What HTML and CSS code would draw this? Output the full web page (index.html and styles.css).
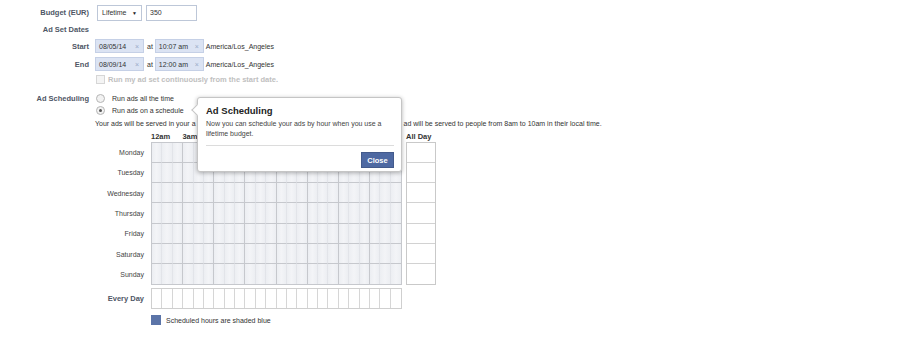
FILE: index.html
```html
<!DOCTYPE html>
<html lang="en">
<head>
    <meta charset="UTF-8">
    <title>Ad Scheduling</title>
    <link rel="stylesheet" href="styles.css">
</head>
<body>
<div class="page">
    <div class="form">
        <div class="row row-budget">
            <div class="label">Budget (EUR)</div>
            <div class="field">
                <span class="select">Lifetime <span class="caret">&#9660;</span></span>
                <span class="text-input">350</span>
            </div>
        </div>
        <div class="row row-section">
            <div class="label">Ad Set Dates</div>
        </div>
        <div class="row row-date">
            <div class="label">Start</div>
            <div class="field">
                <span class="date">08/05/14<i class="clear">&#215;</i></span>
                <span class="at">at</span>
                <span class="date time">10:07 am<i class="clear">&#215;</i></span>
                <span class="tz">America/Los_Angeles</span>
            </div>
        </div>
        <div class="row row-date row-end">
            <div class="label">End</div>
            <div class="field">
                <span class="date">08/09/14<i class="clear">&#215;</i></span>
                <span class="at">at</span>
                <span class="date time">12:00 am<i class="clear">&#215;</i></span>
                <span class="tz">America/Los_Angeles</span>
            </div>
        </div>
        <div class="row row-check">
            <div class="label"></div>
            <div class="field">
                <span class="checkbox"></span>
                <span class="check-text">Run my ad set continuously from the start date.</span>
            </div>
        </div>
        <div class="row row-radio">
            <div class="label">Ad Scheduling</div>
            <div class="field">
                <span class="radio"></span>
                <span>Run ads all the time</span>
            </div>
        </div>
        <div class="row row-radio row-radio2">
            <div class="label"></div>
            <div class="field">
                <span class="radio checked"></span>
                <span>Run ads on a schedule</span>
            </div>
        </div>
        <div class="row row-note">
            <div class="label"></div>
            <div class="field note">
                <span>Your ads will be served in your a</span>
                <span class="note-end">ad will be served to people from 8am to 10am in their local time.</span>
            </div>
        </div>
    </div>

    <div class="schedule">
        <div class="sched-head">
            <div class="day-col"></div>
            <div class="hour-labels">
                <span>12am</span><span>3am</span>
            </div>
            <div class="allday-label">All Day</div>
        </div>
        <div class="sched-body">
            <div class="day-col day-labels">
                <div>Monday</div>
                <div>Tuesday</div>
                <div>Wednesday</div>
                <div>Thursday</div>
                <div>Friday</div>
                <div>Saturday</div>
                <div>Sunday</div>
            </div>
            <div class="hours-grid" id="hours"></div>
            <div class="allday-col" id="allday"></div>
        </div>
        <div class="sched-every">
            <div class="day-col every-label">Every Day</div>
            <div class="every-grid" id="every"></div>
        </div>
        <div class="legend">
            <span class="swatch"></span>
            <span>Scheduled hours are shaded blue</span>
        </div>
    </div>

    <div class="popover">
        <span class="arrow"></span>
        <div class="pop-title">Ad Scheduling</div>
        <div class="pop-text">Now you can schedule your ads by hour when you use a lifetime budget.</div>
        <div class="pop-footer">
            <span class="btn-close">Close</span>
        </div>
    </div>
</div>

<script>
    function fill(id, count, cls) {
        var box = document.getElementById(id);
        for (var i = 0; i < count; i++) {
            var cell = document.createElement("div");
            cell.className = cls;
            box.appendChild(cell);
        }
    }
    fill("hours", 7 * 24, "hour");
    fill("allday", 7, "allday-cell");
    fill("every", 24, "every-cell");
</script>
</body>
</html>
```

FILE: styles.css
```css
body {
    margin: 0;
    font-family: "Liberation Sans", Arial, sans-serif;
    font-size: 7px;
    color: #333;
    background: #fff;
}

.page {
    position: relative;
    width: 900px;
    height: 350px;
}

.form {
    padding-top: 4px;
}

.row {
    display: flex;
    align-items: center;
}

.label {
    width: 89px;
    flex: none;
    text-align: right;
    font-weight: bold;
    font-size: 7.5px;
    color: #4e5665;
}

.field {
    display: flex;
    align-items: center;
    margin-left: 6px;
}

/* budget */
.row-budget {
    height: 17px;
}

.select {
    display: flex;
    align-items: center;
    justify-content: space-between;
    width: 45px;
    height: 16px;
    margin-left: 2px;
    padding: 0 4px;
    box-sizing: border-box;
    border: 1px solid #bdc7d8;
    background: #fff;
}

.caret {
    font-size: 5px;
    color: #222;
}

.text-input {
    display: flex;
    align-items: center;
    width: 51px;
    height: 16px;
    margin-left: 4px;
    padding-left: 3px;
    box-sizing: border-box;
    border: 1px solid #bdc7d8;
}

/* dates */
.row-section {
    height: 16px;
}

.row-date {
    height: 14px;
    margin-top: 2px;
}

.row-end {
    margin-top: 4px;
}

.date {
    display: flex;
    align-items: center;
    justify-content: space-between;
    width: 49px;
    height: 14px;
    padding: 0 4px 0 3px;
    box-sizing: border-box;
    border: 1px solid #c5d0e6;
    background: #dbe3f3;
    color: #333;
}

.clear {
    font-style: normal;
    font-size: 7px;
    color: #9aaac8;
}

.at {
    margin: 0 2px 0 3px;
}

.tz {
    margin-left: 2px;
}

.row-check {
    height: 10px;
    margin-top: 3px;
}

.checkbox {
    width: 7px;
    height: 7px;
    margin-left: 1px;
    border: 1px solid #d6d6d6;
    background: #f4f4f4;
}

.check-text {
    margin-left: 3px;
    font-weight: bold;
    font-size: 7.5px;
    color: #c0c0c0;
}

/* scheduling radios */
.row-radio {
    height: 10px;
    margin-top: 9px;
}

.row-radio2 {
    margin-top: 2px;
}

.radio {
    position: relative;
    width: 7px;
    height: 7px;
    margin: 0 7px 0 1px;
    border: 1px solid #b5b5b5;
    border-radius: 50%;
    background: #f2f2f2;
}

.radio.checked::after {
    content: "";
    position: absolute;
    left: 2px;
    top: 2px;
    width: 3px;
    height: 3px;
    border-radius: 50%;
    background: #555;
}

.row-note {
    height: 10px;
    margin-top: 3px;
}

.note {
    white-space: nowrap;
}

.note-end {
    margin-left: 208px;
}

/* schedule grid */
.schedule {
    margin-left: 95px;
    margin-top: 2px;
}

.day-col {
    width: 49px;
    flex: none;
    margin-right: 7px;
    text-align: right;
}

.sched-head {
    display: flex;
    align-items: flex-end;
    height: 12px;
}

.hour-labels {
    display: grid;
    grid-template-columns: repeat(8, 1fr);
    width: 251px;
    font-weight: bold;
    font-size: 7.5px;
    color: #333;
    line-height: 10px;
}

.allday-label {
    margin-left: 4px;
    font-weight: bold;
    font-size: 7.5px;
    line-height: 10px;
}

.sched-body {
    display: flex;
}

.day-labels {
    display: grid;
    grid-template-rows: repeat(7, 1fr);
    height: 143px;
    color: #444;
}

.day-labels div {
    display: flex;
    align-items: center;
    justify-content: flex-end;
}

.hours-grid {
    display: grid;
    grid-template-columns: repeat(24, 1fr);
    grid-template-rows: repeat(7, 1fr);
    width: 251px;
    height: 143px;
    box-sizing: border-box;
    border: 1px solid #c6c8cd;
}

.hour {
    border-right: 1px solid #e2e4e9;
    border-bottom: 1px solid #c6c8cd;
    background: linear-gradient(90deg, #eceef2, #f3f4f7 50%, #eceef2);
}

.hour:nth-child(3n) {
    border-right-color: #c6c8cd;
}

.hour:nth-child(24n) {
    border-right: none;
}

.hour:nth-child(n+145) {
    border-bottom: none;
}

.allday-col {
    display: grid;
    grid-template-rows: repeat(7, 1fr);
    width: 30px;
    height: 143px;
    margin-left: 4px;
    box-sizing: border-box;
    border: 1px solid #c9c9c9;
}

.allday-cell {
    border-bottom: 1px solid #d2d2d2;
    background: #fff;
}

.allday-cell:last-child {
    border-bottom: none;
}

.sched-every {
    display: flex;
    align-items: center;
    margin-top: 3px;
}

.every-label {
    font-weight: bold;
    font-size: 7.5px;
    color: #4e5665;
}

.every-grid {
    display: grid;
    grid-template-columns: repeat(24, 1fr);
    width: 251px;
    height: 21px;
    box-sizing: border-box;
    border: 1px solid #cfcfcf;
}

.every-cell {
    border-right: 1px solid #d6d6d6;
    background: #fff;
}

.every-cell:last-child {
    border-right: none;
}

.legend {
    display: flex;
    align-items: center;
    margin: 6px 0 0 56px;
}

.swatch {
    width: 10px;
    height: 10px;
    margin-right: 5px;
    background: #5b74a8;
}

/* popover */
.popover {
    position: absolute;
    left: 197px;
    top: 97px;
    width: 205px;
    height: 75px;
    padding: 7px 7px 0 8px;
    box-sizing: border-box;
    border: 1px solid #c5c5c5;
    border-radius: 3px;
    background: #fff;
    box-shadow: 0 1px 4px rgba(0, 0, 0, 0.3);
}

.arrow {
    position: absolute;
    left: -5px;
    top: 8px;
    width: 7px;
    height: 7px;
    border-left: 1px solid #c5c5c5;
    border-bottom: 1px solid #c5c5c5;
    background: #fff;
    transform: rotate(45deg);
}

.pop-title {
    font-weight: bold;
    font-size: 9.5px;
    color: #222;
    line-height: 12px;
}

.pop-text {
    width: 185px;
    margin-top: 2px;
    line-height: 10px;
    color: #444;
}

.pop-footer {
    display: flex;
    justify-content: flex-end;
    margin-top: 6px;
    padding-top: 6px;
    border-top: 1px solid #dcdcdc;
}

.btn-close {
    display: flex;
    align-items: center;
    justify-content: center;
    width: 33px;
    height: 16px;
    box-sizing: border-box;
    border: 1px solid #435a8b;
    background: #4e69a2;
    color: #fff;
    font-weight: bold;
    font-size: 7.5px;
}
```
